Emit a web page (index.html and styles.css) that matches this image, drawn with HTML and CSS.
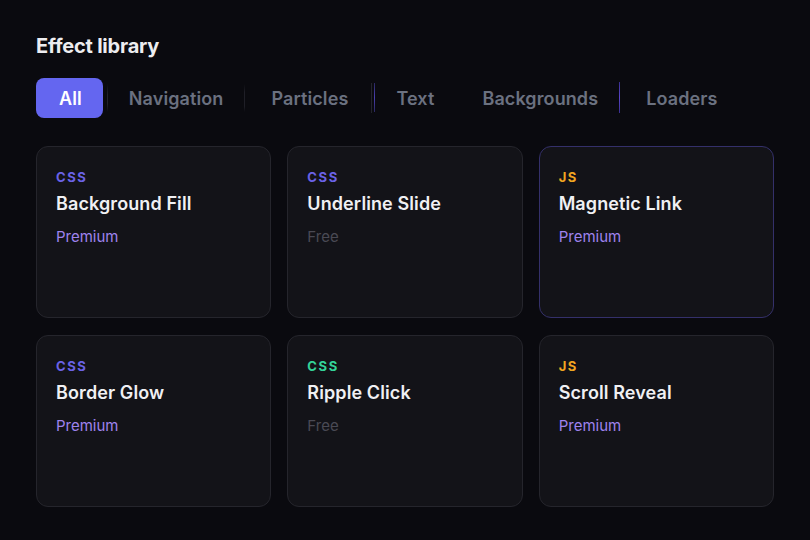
FILE: index.html
```html
<!DOCTYPE html>
<html lang="en">
<head>
<meta charset="utf-8">
<title>Effect library</title>
<link rel="stylesheet" href="styles.css">
</head>
<body>
<main class="page">
  <h1 class="title">Effect library</h1>
  <nav class="tabs">
    <span class="tab active">All</span>
    <span class="tab edge-l edge-r">Navigation</span>
    <span class="tab edge-r-gray">Particles</span>
    <span class="tab edge-l-purple">Text</span>
    <span class="tab edge-r-purple">Backgrounds</span>
    <span class="tab">Loaders</span>
  </nav>
  <section class="grid">
    <article class="card">
      <div class="lang lang-css">CSS</div>
      <h2 class="name">Background Fill</h2>
      <div class="tier premium">Premium</div>
    </article>
    <article class="card">
      <div class="lang lang-css">CSS</div>
      <h2 class="name">Underline Slide</h2>
      <div class="tier free">Free</div>
    </article>
    <article class="card card-focus">
      <div class="lang lang-js">JS</div>
      <h2 class="name">Magnetic Link</h2>
      <div class="tier premium">Premium</div>
    </article>
    <article class="card">
      <div class="lang lang-css">CSS</div>
      <h2 class="name">Border Glow</h2>
      <div class="tier premium">Premium</div>
    </article>
    <article class="card">
      <div class="lang lang-green">CSS</div>
      <h2 class="name">Ripple Click</h2>
      <div class="tier free">Free</div>
    </article>
    <article class="card">
      <div class="lang lang-js">JS</div>
      <h2 class="name">Scroll Reveal</h2>
      <div class="tier premium">Premium</div>
    </article>
  </section>
</main>
</body>
</html>
```
FILE: styles.css
```css
* { box-sizing: border-box; }
html, body {
  margin: 0;
  padding: 0;
  background: #0a0a0f;
  height: 100%;
}
body {
  font-family: Inter, "Noto Sans", sans-serif;
  color: #ececf0;
}
.page {
  padding: 33px 36px 0 36px;
}
.title {
  margin: 0 0 19px 0;
  font-size: 20px;
  line-height: 26px;
  font-weight: 700;
  color: #ededf0;
  letter-spacing: -0.2px;
}
.tabs {
  display: flex;
  gap: 4px;
  align-items: center;
  margin-bottom: 28px;
}
.tab {
  position: relative;
  height: 40px;
  display: flex;
  align-items: center;
  padding: 0 22px;
  border-radius: 8px;
  font-size: 18px;
  font-weight: 600;
  letter-spacing: 0.1px;
  color: #6b7180;
}
.tab.active {
  background: #6466f0;
  color: #ffffff;
  padding: 0 21px 0 23px;
}
.edge-l::before,
.edge-r::after,
.edge-r-gray::after,
.edge-l-purple::before,
.edge-r-purple::after {
  content: "";
  position: absolute;
  top: 6px;
  bottom: 6px;
  width: 1px;
}
.edge-l::before { left: 0; background: linear-gradient(transparent, #23232b 40%, #23232b 70%, transparent); }
.edge-r::after { right: 0; background: linear-gradient(transparent, #1f1f27 30%, #1f1f27 80%, transparent); }
.edge-r-gray::after { right: -2px; top: 5px; bottom: 5px; background: #24242c; }
.edge-l-purple::before { left: 0; top: 5px; bottom: 6px; background: linear-gradient(#2b2860, #4a3fb0 50%, #2b2860); }
.edge-r-purple::after { right: 0; top: 4px; bottom: 5px; background: linear-gradient(#3a2f90, #5a45c8 50%, #3a2f90); }
.grid {
  display: grid;
  grid-template-columns: repeat(3, 1fr);
  column-gap: 16px;
  row-gap: 17px;
  width: 738px;
}
.card {
  height: 172px;
  background: #131318;
  border: 1px solid #25252c;
  border-radius: 12px;
  padding: 22px 19px;
}
.card-focus {
  border-color: #34306a;
}
.lang {
  font-size: 13px;
  line-height: 16px;
  font-weight: 700;
  letter-spacing: 1.6px;
}
.lang-css { color: #6a62e6; }
.lang-js { color: #f0a521; }
.lang-green { color: #34d399; }
.name {
  margin: 7px 0 0 0;
  font-size: 18px;
  line-height: 24px;
  font-weight: 600;
  color: #f0f0f3;
  letter-spacing: 0.1px;
}
.tier {
  margin-top: 11px;
  font-size: 15px;
  line-height: 20px;
  font-weight: 400;
}
.premium { color: #9f83ee; }
.free { color: #4a4a54; }
```
